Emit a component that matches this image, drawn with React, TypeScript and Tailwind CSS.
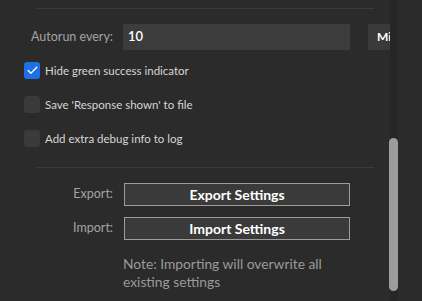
import { Check } from 'lucide-react'

const font = { fontFamily: 'Lato, "Noto Sans", sans-serif' }

function Box({ checked, label }: { checked?: boolean; label: string }) {
  return (
    <div className="flex items-center h-[17px] pl-[24px] gap-[5px]">
      <div
        className={`w-[16px] h-[17px] shrink-0 rounded-[3px] flex items-center justify-center ${
          checked ? 'bg-[#1f6fe5]' : 'bg-[#3a3a3a]'
        }`}
      >
        {checked && <Check size={13} strokeWidth={2.5} className="text-white" />}
      </div>
      <span className="text-[11.5px] text-[#d6d6d6] leading-none">{label}</span>
    </div>
  )
}

function ActionRow({ label, text }: { label: string; text: string }) {
  return (
    <div className="flex items-center h-[23px]">
      <div className="w-[113px] shrink-0 text-right text-[12.5px] text-[#a3a3a3]">{label}</div>
      <button className="ml-[11px] shrink-0 w-[226px] h-[23px] border border-[#9c9c9c] bg-[#3a3a3a] text-[14px] font-bold text-white">
        {text}
      </button>
    </div>
  )
}

export default function App() {
  return (
    <div className="w-[422px] h-[301px] bg-[#2b2b2b] flex overflow-hidden" style={font}>
      <div className="w-[390px] shrink-0 overflow-hidden">
        <div className="pt-[8px] ml-[36px] w-[338px]">
          <div className="h-px bg-[#3b3b3b]" />
        </div>

        <div className="flex items-center mt-[15px] h-[26px]">
          <div className="w-[113px] shrink-0 text-right text-[12.5px] text-[#a3a3a3]">Autorun every:</div>
          <div className="ml-[10px] shrink-0 w-[227px] h-[26px] bg-[#3c3c3c] flex items-center pl-[5px] text-[13px] font-semibold text-white">
            10
          </div>
          <div className="ml-[18px] shrink-0 w-[60px] h-[26px] bg-[#3a3a3a] flex items-center pl-[9px] text-[12px] font-bold text-white">
            Minutes
          </div>
        </div>

        <div className="flex flex-col gap-[17px] mt-[12px]">
          <Box checked label="Hide green success indicator" />
          <Box label="Save 'Response shown' to file" />
          <Box label="Add extra debug info to log" />
        </div>

        <div className="mt-[20px] ml-[36px] w-[338px] h-px bg-[#3b3b3b]" />

        <div className="flex flex-col gap-[11px] mt-[15px]">
          <ActionRow label="Export:" text="Export Settings" />
          <ActionRow label="Import:" text="Import Settings" />
        </div>

        <p className="ml-[123px] mt-[15px] text-[13.8px] leading-[18px] text-[#9a9a9a]">
          Note: Importing will overwrite all
          <br />
          existing settings
        </p>
      </div>

      <div className="w-[8px] h-full bg-[#262626] relative">
        <div className="absolute left-[-1px] w-[9px] top-[138px] h-[153px] rounded-full bg-[#9c9c9c]" />
      </div>
    </div>
  )
}
